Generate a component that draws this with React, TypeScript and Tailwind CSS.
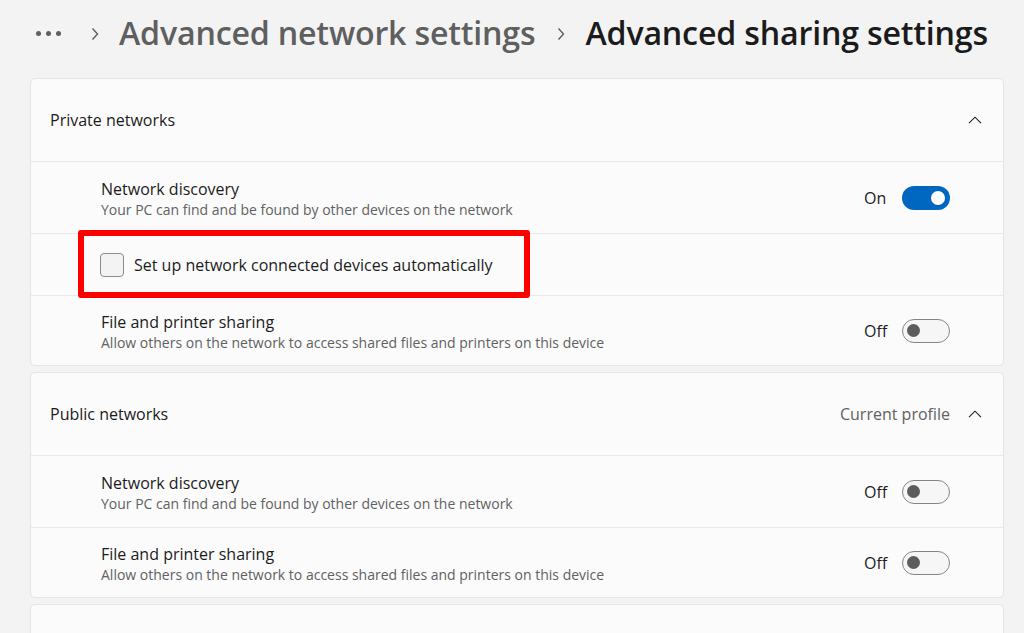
import React from "react";

const font = { fontFamily: '"Open Sans", "Noto Sans", sans-serif' };

function ChevronUp() {
  return (
    <svg width="14" height="8" viewBox="0 0 14 8" fill="none">
      <path d="M1 7.2L7 1.2L13 7.2" stroke="#1b1b1b" strokeWidth="1.1" />
    </svg>
  );
}

function ChevronRight() {
  return (
    <svg width="8" height="14" viewBox="0 0 8 14" fill="none">
      <path d="M1.5 1.5L6.5 7L1.5 12.5" stroke="#5f5f5f" strokeWidth="1.4" />
    </svg>
  );
}

function Toggle({ on }: { on: boolean }) {
  if (on) {
    return (
      <div className="w-12 h-6 rounded-full bg-[#0067c0] flex items-center justify-end pr-[5px]">
        <div className="w-[14px] h-[14px] rounded-full bg-white" />
      </div>
    );
  }
  return (
    <div className="w-12 h-6 rounded-full bg-[#f6f6f6] border border-[#858585] flex items-center pl-[4px]">
      <div className="w-[13px] h-[13px] rounded-full bg-[#5d5d5d]" />
    </div>
  );
}

function SettingRow({
  title,
  sub,
  on,
  h,
}: {
  title: string;
  sub: string;
  on: boolean;
  h: string;
}) {
  return (
    <div className={`flex items-center border-t border-[#e9e9e9] pl-[70px] pr-[53px] ${h}`}>
      <div className="flex-1 flex flex-col pt-[3px]">
        <div className="text-[16px] leading-[21px] text-[#1b1b1b]">{title}</div>
        <div className="text-[14px] leading-[20px] text-[#616161]">{sub}</div>
      </div>
      <div className="flex items-center gap-4">
        <span className="text-[16px] text-[#1b1b1b] w-[22px]">{on ? "On" : "Off"}</span>
        <Toggle on={on} />
      </div>
    </div>
  );
}

export default function App() {
  return (
    <div className="w-[1024px] h-[633px] overflow-hidden bg-[#f3f3f3] relative" style={font}>
      <div className="h-[78px] flex items-center pl-[36px] pb-[11px]">
        <div className="flex gap-[5px] items-center">
          <div className="w-[5px] h-[5px] rounded-full bg-[#5f5f5f]" />
          <div className="w-[5px] h-[5px] rounded-full bg-[#5f5f5f]" />
          <div className="w-[5px] h-[5px] rounded-full bg-[#5f5f5f]" />
        </div>
        <div className="ml-[30px] mr-[20px] flex items-center">
          <ChevronRight />
        </div>
        <span className="text-[32.2px] font-semibold text-[#5f5f5f] tracking-[-0.2px]">
          Advanced network settings
        </span>
        <div className="ml-[22px] mr-[20px] flex items-center">
          <ChevronRight />
        </div>
        <span className="text-[32.2px] font-semibold text-[#1b1b1b] tracking-[-0.2px]">
          Advanced sharing settings
        </span>
      </div>

      <div className="ml-[30px] mr-[20px] flex flex-col gap-[6px]">
        <div className="bg-[#fbfbfb] border border-[#e5e5e5] rounded-[5px]">
          <div className="h-[82px] flex items-center pl-[19px] pr-[21px]">
            <div className="flex-1 text-[16px] text-[#1b1b1b]">Private networks</div>
            <ChevronUp />
          </div>
          <SettingRow
            h="h-[72px]"
            title="Network discovery"
            sub="Your PC can find and be found by other devices on the network"
            on={true}
          />
          <div className="h-[62px] flex items-center border-t border-[#e9e9e9] pl-[69px]">
            <div className="w-[24px] h-[24px] rounded-[4px] border border-[#8c8c8c] bg-[#f3f3f3]" />
            <span className="ml-[10px] text-[16px] text-[#1b1b1b]">
              Set up network connected devices automatically
            </span>
          </div>
          <SettingRow
            h="h-[70px]"
            title="File and printer sharing"
            sub="Allow others on the network to access shared files and printers on this device"
            on={false}
          />
        </div>

        <div className="bg-[#fbfbfb] border border-[#e5e5e5] rounded-[5px]">
          <div className="h-[82px] flex items-center pl-[19px] pr-[21px]">
            <div className="flex-1 text-[16px] text-[#1b1b1b]">Public networks</div>
            <span className="text-[16px] text-[#616161] mr-[18px]">Current profile</span>
            <ChevronUp />
          </div>
          <SettingRow
            h="h-[72px]"
            title="Network discovery"
            sub="Your PC can find and be found by other devices on the network"
            on={false}
          />
          <SettingRow
            h="h-[70px]"
            title="File and printer sharing"
            sub="Allow others on the network to access shared files and printers on this device"
            on={false}
          />
        </div>

        <div className="bg-[#fbfbfb] border border-[#e5e5e5] rounded-[5px] h-[80px]" />
      </div>

      <div className="absolute left-[78px] top-[230px] w-[452px] h-[68px] border-[6px] border-[#ff0000] rounded-[3px]" />
    </div>
  );
}
